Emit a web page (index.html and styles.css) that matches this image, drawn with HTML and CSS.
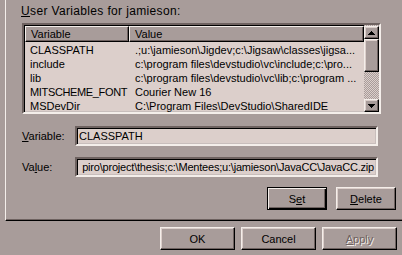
FILE: index.html
```html
<!DOCTYPE html>
<html>
<head>
<meta charset="utf-8">
<link rel="stylesheet" href="styles.css">
</head>
<body>
<div class="panel">
  <div class="group-label"><u>U</u>ser Variables for jamieson:</div>
  <div class="listbox">
    <div class="list-main">
      <div class="header">
        <div class="hcell c1">Variable</div>
        <div class="hcell c2">Value</div>
      </div>
      <div class="row"><span class="c1">CLASSPATH</span><span class="c2">.;u:\jamieson\Jigdev;c:\Jigsaw\classes\jigsa...</span></div>
      <div class="row"><span class="c1">include</span><span class="c2">c:\program files\devstudio\vc\include;c:\pro...</span></div>
      <div class="row"><span class="c1">lib</span><span class="c2">c:\program files\devstudio\vc\lib;c:\program ...</span></div>
      <div class="row"><span class="c1 long">MITSCHEME_FONT</span><span class="c2">Courier New 16</span></div>
      <div class="row"><span class="c1">MSDevDir</span><span class="c2">C:\Program Files\DevStudio\SharedIDE</span></div>
    </div>
    <div class="scrollbar">
      <div class="sbtn"><svg width="7" height="4" viewBox="0 0 7 4"><path d="M3 0h1v1h1v1h1v1h1v1H0V3h1V2h1V1h1z" fill="#000"/></svg></div>
      <div class="thumb"></div>
      <div class="track"></div>
      <div class="sbtn"><svg width="7" height="4" viewBox="0 0 7 4"><path d="M0 0h7v1H6v1H5v1H4v1H3V3H2V2H1V1H0z" fill="#000"/></svg></div>
    </div>
  </div>
  <div class="field-row first">
    <label class="flabel"><u>V</u>ariable:</label>
    <div class="edit">CLASSPATH</div>
  </div>
  <div class="field-row">
    <label class="flabel">Va<u>l</u>ue:</label>
    <div class="edit right"><span>piro\project\thesis;c:\Mentees;u:\jamieson\JavaCC\JavaCC.zip</span></div>
  </div>
  <div class="btn-row">
    <div class="btn default"><span>S<u>e</u>t</span></div>
    <div class="btn"><span><u>D</u>elete</span></div>
  </div>
</div>
<div class="dialog-buttons">
  <div class="btn big"><span>OK</span></div>
  <div class="btn big"><span>Cancel</span></div>
  <div class="btn big disabled"><span><u>A</u>pply</span></div>
</div>
</body>
</html>
```
FILE: styles.css
```css
html, body {
  margin: 0;
  padding: 0;
}
body {
  width: 402px;
  height: 255px;
  overflow: hidden;
  background: #a89c9a;
  font-family: "Liberation Sans", Arial, sans-serif;
  font-size: 11px;
  color: #000;
}
u { text-decoration: underline; text-underline-offset: 1px; }

.panel {
  margin-left: 5px;
  width: 389px;
  height: 220px;
  border-left: 1px solid #f4eeea;
  border-right: 1px solid #000;
  border-bottom: 1px solid #000;
  box-shadow: inset -1px -1px 0 #6e6260;
  padding-left: 15px;
  box-sizing: content-box;
  display: flex;
  flex-direction: column;
}
.group-label {
  margin-top: 5px;
  height: 13px;
  line-height: 13px;
  font-size: 12px;
  letter-spacing: 0.35px;
}
.listbox {
  margin-top: 5px;
  margin-left: 1px;
  width: 355px;
  height: 87px;
  border: 2px solid;
  border-color: #6e6260 #f4eeea #f4eeea #6e6260;
  box-shadow: inset 1px 1px 0 #000, inset -1px -1px 0 #c8bebc;
  background: #dccfcb;
  display: flex;
  overflow: hidden;
}
.list-main {
  flex: 1;
  padding-top: 1px;
  padding-left: 1px;
  overflow: hidden;
}
.header {
  display: flex;
  height: 16px;
}
.hcell {
  height: 16px;
  box-sizing: border-box;
  background: #a89c9a;
  border-top: 1px solid #f4eeea;
  border-left: 1px solid #f4eeea;
  border-right: 1px solid #000;
  border-bottom: 1px solid #000;
  box-shadow: inset -1px -1px 0 #6e6260;
  line-height: 14px;
  padding-left: 5px;
  white-space: nowrap;
}
.hcell.c1 { width: 104px; }
.hcell.c2 { flex: 1; }
.row {
  display: flex;
  height: 14px;
  line-height: 14px;
  white-space: nowrap;
}
.row .c1 { width: 104px; padding-left: 5px; box-sizing: border-box; }
.row .c1.long { letter-spacing: -0.35px; }
.row .c2 { padding-left: 6px; }
.header + .row { margin-top: 1px; }

.scrollbar {
  width: 15px;
  padding-top: 1px;
  display: flex;
  flex-direction: column;
  background: repeating-conic-gradient(#dccfcb 0 25%, #a89c9a 0 50%) 0 0 / 2px 2px;
}
.sbtn, .thumb {
  box-sizing: border-box;
  background: #a89c9a;
  border-top: 1px solid #f4eeea;
  border-left: 1px solid #f4eeea;
  border-right: 1px solid #000;
  border-bottom: 1px solid #000;
  box-shadow: inset -1px -1px 0 #6e6260, inset 1px 1px 0 #dccfcb;
}
.sbtn {
  height: 13px;
  display: flex;
  align-items: center;
  justify-content: center;
}
.sbtn svg { display: block; }
.thumb { height: 33px; }
.track { flex: 1; }

.field-row {
  display: flex;
  align-items: center;
  margin-top: 11px;
  height: 20px;
}
.field-row.first { margin-top: 12px; }
.flabel {
  width: 53px;
  padding-left: 1px;
}
.edit {
  width: 303px;
  height: 20px;
  box-sizing: border-box;
  border: 2px solid;
  border-color: #6e6260 #f4eeea #f4eeea #6e6260;
  box-shadow: inset 1px 1px 0 #000, inset -1px -1px 0 #c8bebc;
  background: #dccfcb;
  line-height: 16px;
  padding-left: 2px;
  white-space: nowrap;
  overflow: hidden;
}
.edit.right {
  display: flex;
  justify-content: flex-end;
  padding-right: 2px;
  letter-spacing: -0.2px;
}
.btn-row {
  display: flex;
  justify-content: flex-end;
  gap: 9px;
  margin-top: 10px;
  padding-right: 14px;
}
.btn {
  width: 60px;
  height: 23px;
  box-sizing: border-box;
  background: #a89c9a;
  border-top: 1px solid #f4eeea;
  border-left: 1px solid #f4eeea;
  border-right: 1px solid #000;
  border-bottom: 1px solid #000;
  box-shadow: inset -1px -1px 0 #6e6260, inset 1px 1px 0 #dccfcb;
  display: flex;
  align-items: center;
  justify-content: center;
}
.btn.default {
  border: 1px solid #000;
  box-shadow: inset 1px 1px 0 #f4eeea, inset -1px -1px 0 #000, inset -2px -2px 0 #6e6260;
}
.dialog-buttons {
  display: flex;
  justify-content: flex-end;
  gap: 6px;
  margin-top: 6px;
  padding-right: 5px;
}
.btn.big { width: 75px; }
.btn.disabled span {
  color: #6e6260;
  text-shadow: 1px 1px 0 #f4eeea;
}
```
